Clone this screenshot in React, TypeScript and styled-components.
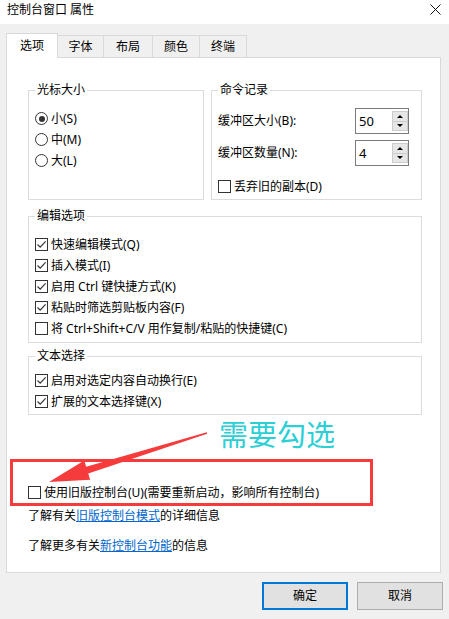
import React from 'react';
import styled, { createGlobalStyle } from 'styled-components';

const Global = createGlobalStyle`
  html, body { margin: 0; padding: 0; background: #f0f0f0; }
  body {
    font-family: "Noto Sans", "Noto Sans CJK SC", "Liberation Sans", sans-serif;
    font-size: 12px;
    line-height: 16px;
    color: #000;
  }
  * { box-sizing: border-box; }
`;

const Window = styled.div`
  position: relative;
  width: 449px;
  height: 619px;
  overflow: hidden;
  background: #f0f0f0;
  display: flex;
  flex-direction: column;
`;

const TitleBar = styled.div`
  height: 24px;
  background: #fff;
  display: flex;
  align-items: flex-start;
  justify-content: space-between;
  padding: 2px 8px 0 7px;
`;

const Title = styled.span`
  font-size: 12px;
  line-height: 16px;
`;

const CloseButton = styled.div`
  width: 12px;
  height: 12px;
  margin-top: 1px;
  display: flex;
  align-items: center;
  justify-content: center;
`;

const Body = styled.div`
  flex: 1;
  display: flex;
  flex-direction: column;
  padding: 9px 6px 0 6px;
`;

const TabRow = styled.div`
  height: 24px;
  display: flex;
  align-items: flex-end;
`;

const Tab = styled.div<{ $active?: boolean; $w: number }>`
  position: relative;
  z-index: ${p => (p.$active ? 2 : 1)};
  width: ${p => p.$w}px;
  height: ${p => (p.$active ? 25 : 22)}px;
  margin-bottom: ${p => (p.$active ? -1 : 0)}px;
  margin-left: ${p => (p.$active ? 0 : -1)}px;
  background: ${p => (p.$active ? '#fff' : '#f0f0f0')};
  border: 1px solid #d9d9d9;
  border-bottom: none;
  display: flex;
  align-items: center;
  justify-content: center;
  padding-top: ${p => (p.$active ? 0 : 1)}px;
`;

const Panel = styled.div`
  height: 516px;
  margin-right: 2px;
  background: #fff;
  border: 1px solid #d9d9d9;
  padding: 24px 18px 0 21px;
  display: flex;
  flex-direction: column;
`;

const TopGrid = styled.div`
  display: grid;
  grid-template-columns: 176px 211px;
  column-gap: 7px;
  height: 118px;
`;

const Group = styled.fieldset<{ $pt: number; $pb: number; $mt?: number }>`
  margin: ${p => p.$mt ?? 0}px 0 0 0;
  border: 1px solid #dcdcdc;
  padding: ${p => p.$pt}px 6px ${p => p.$pb}px 6px;
  min-width: 0;
  display: flex;
  flex-direction: column;
`;

const Legend = styled.legend`
  padding: 0 2px;
  margin: 0;
  font-size: 12px;
  line-height: 16px;
`;

const OptionRow = styled.label<{ $mt?: number }>`
  display: flex;
  align-items: center;
  gap: 3px;
  height: 21px;
  margin-top: ${p => p.$mt ?? 0}px;
  white-space: nowrap;
`;

const CheckBox = styled.span`
  flex: none;
  width: 13px;
  height: 13px;
  border: 1px solid #333;
  background: #fff;
  display: flex;
  align-items: center;
  justify-content: center;
`;

const RadioCircle = styled.span`
  flex: none;
  width: 13px;
  height: 13px;
  border: 1px solid #333;
  border-radius: 50%;
  background: #fff;
  display: flex;
  align-items: center;
  justify-content: center;
`;

const RadioDot = styled.span`
  width: 6px;
  height: 6px;
  border-radius: 50%;
  background: #333;
`;

const SpinRow = styled.div<{ $mt?: number }>`
  display: grid;
  grid-template-columns: 137px 54px;
  align-items: center;
  height: 26px;
  margin-top: ${p => p.$mt ?? 0}px;
`;

const SpinBox = styled.div`
  height: 26px;
  border: 1px solid #7a7a7a;
  display: flex;
  align-items: stretch;
`;

const SpinValue = styled.div`
  flex: 1;
  padding-left: 3px;
  display: flex;
  align-items: center;
  font-size: 13px;
`;

const SpinButtons = styled.div`
  width: 16px;
  padding: 2px 0 2px 0;
  display: flex;
  flex-direction: column;
`;

const SpinButton = styled.div<{ $down?: boolean }>`
  flex: 1;
  background: #e6e6e6;
  border: 1px solid #cccccc;
  margin-top: ${p => (p.$down ? -1 : 0)}px;
  display: flex;
  align-items: center;
  justify-content: center;
  &::after {
    content: '';
    width: 0;
    height: 0;
    border-left: 3px solid transparent;
    border-right: 3px solid transparent;
    ${p => (p.$down ? 'border-top: 3px solid #000;' : 'border-bottom: 3px solid #000;')}
  }
`;

const InfoLine = styled.div<{ $mt: number }>`
  line-height: 16px;
  margin-top: ${p => p.$mt}px;
  white-space: nowrap;
`;

const Link = styled.a`
  color: #0066cc;
  text-decoration: underline;
  cursor: pointer;
`;

const ButtonRow = styled.div`
  display: flex;
  justify-content: flex-end;
  gap: 9px;
  margin-top: 9px;
`;

const DialogButton = styled.button<{ $primary?: boolean }>`
  width: 86px;
  height: 28px;
  background: #e1e1e1;
  border: ${p => (p.$primary ? '2px solid #0078d7' : '1px solid #adadad')};
  font-family: inherit;
  font-size: 12px;
  line-height: 16px;
  color: #000;
  padding: 0;
`;

/* Annotation overlay (drawn on top of the dialog) */
const HighlightBox = styled.div`
  position: absolute;
  left: 10px;
  top: 459px;
  width: 363px;
  height: 47px;
  border: 3px solid #f53b3b;
  pointer-events: none;
`;

const AnnotationText = styled.div`
  position: absolute;
  left: 219px;
  top: 417px;
  font-family: "Noto Sans CJK SC", sans-serif;
  font-size: 29px;
  line-height: 32px;
  color: #2ccfd6;
  white-space: nowrap;
  pointer-events: none;
`;

const ArrowLayer = styled.svg`
  position: absolute;
  left: 0;
  top: 0;
  pointer-events: none;
`;

const Check = () => (
  <svg width="11" height="11" viewBox="0 0 11 11">
    <path d="M1.5 5.5 L4.2 8.2 L9.6 2.4" fill="none" stroke="#333" strokeWidth="1.2" />
  </svg>
);

const CheckOption: React.FC<{ checked?: boolean; mt?: number; children: React.ReactNode }> = ({ checked, mt, children }) => (
  <OptionRow $mt={mt}>
    <CheckBox>{checked && <Check />}</CheckBox>
    <span>{children}</span>
  </OptionRow>
);

const RadioOption: React.FC<{ checked?: boolean; children: React.ReactNode }> = ({ checked, children }) => (
  <OptionRow>
    <RadioCircle>{checked && <RadioDot />}</RadioCircle>
    <span>{children}</span>
  </OptionRow>
);

const Spinner: React.FC<{ label: string; value: string; mt?: number }> = ({ label, value, mt }) => (
  <SpinRow $mt={mt}>
    <span>{label}</span>
    <SpinBox>
      <SpinValue>{value}</SpinValue>
      <SpinButtons>
        <SpinButton />
        <SpinButton $down />
      </SpinButtons>
    </SpinBox>
  </SpinRow>
);

function arrowPoints() {
  const tail = { x: 207, y: 433 };
  const tip = { x: 49, y: 482 };
  const dx = tip.x - tail.x;
  const dy = tip.y - tail.y;
  const len = Math.hypot(dx, dy);
  const u = { x: dx / len, y: dy / len };
  const n = { x: -u.y, y: u.x };
  const L = 40;
  const W = 10;
  const base = { x: tip.x - L * u.x, y: tip.y - L * u.y };
  const p = (pt: { x: number; y: number }, k: number) => `${(pt.x + k * n.x).toFixed(1)},${(pt.y + k * n.y).toFixed(1)}`;
  return [
    `${tip.x},${tip.y}`,
    p(base, W),
    p(base, 3.5),
    p(tail, 0.7),
    p(tail, -0.7),
    p(base, -3.5),
    p(base, -W),
  ].join(' ');
}

export default function App() {
  const tabs: { label: string; w: number; active?: boolean }[] = [
    { label: '选项', w: 52, active: true },
    { label: '字体', w: 47 },
    { label: '布局', w: 50 },
    { label: '颜色', w: 48 },
    { label: '终端', w: 48 },
  ];
  return (
    <>
      <Global />
      <Window>
        <TitleBar>
          <Title>控制台窗口 属性</Title>
          <CloseButton>
            <svg width="11" height="11" viewBox="0 0 11 11">
              <path d="M0.5 0.5 L10.5 10.5 M10.5 0.5 L0.5 10.5" stroke="#111" strokeWidth="1" />
            </svg>
          </CloseButton>
        </TitleBar>
        <Body>
          <TabRow>
            {tabs.map(t => (
              <Tab key={t.label} $w={t.w} $active={t.active}>
                {t.label}
              </Tab>
            ))}
          </TabRow>
          <Panel>
            <TopGrid>
              <Group $pt={10} $pb={0}>
                <Legend>光标大小</Legend>
                <RadioOption checked>小(S)</RadioOption>
                <RadioOption>中(M)</RadioOption>
                <RadioOption>大(L)</RadioOption>
              </Group>
              <Group $pt={10} $pb={0}>
                <Legend>命令记录</Legend>
                <Spinner label="缓冲区大小(B):" value="50" />
                <Spinner label="缓冲区数量(N):" value="4" mt={6} />
                <CheckOption mt={10}>丢弃旧的副本(D)</CheckOption>
              </Group>
            </TopGrid>
            <Group $pt={10} $pb={3} $mt={8}>
              <Legend>编辑选项</Legend>
              <CheckOption checked>快速编辑模式(Q)</CheckOption>
              <CheckOption checked>插入模式(I)</CheckOption>
              <CheckOption checked>启用 Ctrl 键快捷方式(K)</CheckOption>
              <CheckOption checked>粘贴时筛选剪贴板内容(F)</CheckOption>
              <CheckOption>将 Ctrl+Shift+C/V 用作复制/粘贴的快捷键(C)</CheckOption>
            </Group>
            <Group $pt={6} $pb={2} $mt={5}>
              <Legend>文本选择</Legend>
              <CheckOption checked>启用对选定内容自动换行(E)</CheckOption>
              <CheckOption checked>扩展的文本选择键(X)</CheckOption>
            </Group>
            <CheckOption mt={67}>使用旧版控制台(U)(需要重新启动，影响所有控制台)</CheckOption>
            <InfoLine $mt={5}>
              了解有关<Link>旧版控制台模式</Link>的详细信息
            </InfoLine>
            <InfoLine $mt={14}>
              了解更多有关<Link>新控制台功能</Link>的信息
            </InfoLine>
          </Panel>
          <ButtonRow>
            <DialogButton $primary>确定</DialogButton>
            <DialogButton>取消</DialogButton>
          </ButtonRow>
        </Body>
        <HighlightBox />
        <AnnotationText>需要勾选</AnnotationText>
        <ArrowLayer width="449" height="619" viewBox="0 0 449 619">
          <polygon points={arrowPoints()} fill="#f53b3b" />
        </ArrowLayer>
      </Window>
    </>
  );
}
